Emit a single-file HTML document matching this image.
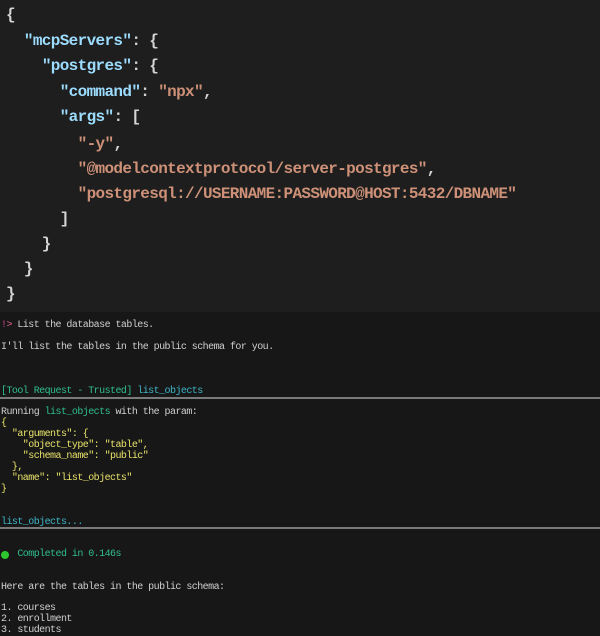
<!DOCTYPE html>
<html><head><style>
body{margin:0;width:600px;height:636px;overflow:hidden;background:#171717;font-family:"Liberation Mono",monospace;}
#top{position:absolute;left:0;top:0;width:600px;height:312px;background:#1e1e1e;}
.t{position:absolute;font-size:16px;letter-spacing:-0.65px;line-height:18px;color:#d4d4d4;white-space:pre;font-weight:bold;}
.k{color:#9cdcfe}.s{color:#ce9178}
.b{position:absolute;font-size:10px;letter-spacing:-0.55px;line-height:11px;color:#d0d0d0;white-space:pre;left:1px}
.y{color:#e8e36a}.c{color:#3fb6c9}.g{color:#2fbf8f}
.hr{position:absolute;left:0;width:600px;height:2px;background:#7a7a7a}
</style></head><body>
<div id="top">
<div class="t" style="left:6px;top:6px">{</div>
<div class="t" style="left:6px;top:32px">  <span class="k">"mcpServers"</span>: {</div>
<div class="t" style="left:6px;top:57px">    <span class="k">"postgres"</span>: {</div>
<div class="t" style="left:6px;top:83px">      <span class="k">"command"</span>: <span class="s">"npx"</span>,</div>
<div class="t" style="left:6px;top:108px">      <span class="k">"args"</span>: [</div>
<div class="t" style="left:6px;top:135px">        <span class="s">"-y"</span>,</div>
<div class="t" style="left:6px;top:160px">        <span class="s">"@modelcontextprotocol/server-postgres"</span>,</div>
<div class="t" style="left:6px;top:185px">        <span class="s">"postgresql://USERNAME:PASSWORD@HOST:5432/DBNAME"</span></div>
<div class="t" style="left:6px;top:210px">      ]</div>
<div class="t" style="left:6px;top:235px">    }</div>
<div class="t" style="left:6px;top:260px">  }</div>
<div class="t" style="left:6px;top:285px">}</div>
</div>
<div class="b" style="top:320px"><span style="color:#d0448f">!</span><span style="color:#e0608f">&gt;</span> List the database tables.</div>
<div class="b" style="top:342px">I'll list the tables in the public schema for you.</div>
<div class="b" style="top:386px"><span class="g">[Tool Request - Trusted]</span> <span class="c">list_objects</span></div>
<div class="hr" style="top:397px"></div>
<div class="b" style="top:407px">Running <span class="g">list_objects</span> with the param:</div>
<div class="b y" style="top:418px">{</div>
<div class="b y" style="top:429px">  "arguments": {</div>
<div class="b y" style="top:440px">    "object_type": "table",</div>
<div class="b y" style="top:451px">    "schema_name": "public"</div>
<div class="b y" style="top:462px">  },</div>
<div class="b y" style="top:473px">  "name": "list_objects"</div>
<div class="b y" style="top:484px">}</div>
<div class="b c" style="top:517px">list_objects...</div>
<div class="hr" style="top:527px"></div>
<div style="position:absolute;left:1px;top:551px;width:8px;height:8px;border-radius:50%;background:#2ec82e"></div>
<div class="b g" style="top:549px">   Completed in 0.146s</div>
<div class="b" style="top:582px">Here are the tables in the public schema:</div>
<div class="b" style="top:603px">1. courses</div>
<div class="b" style="top:614px">2. enrollment</div>
<div class="b" style="top:625px">3. students</div>
</body></html>
